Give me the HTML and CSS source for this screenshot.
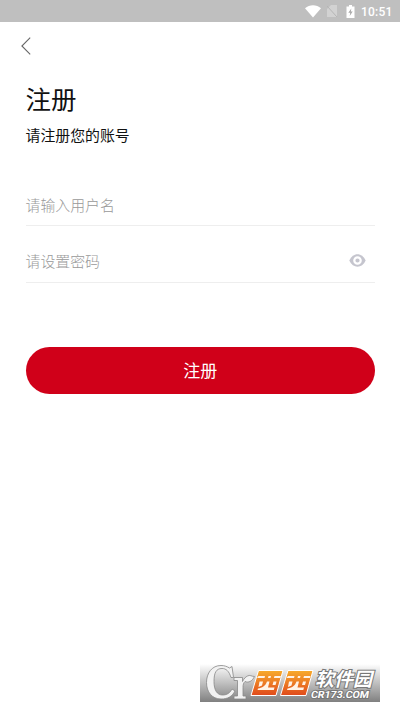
FILE: index.html
```html
<!DOCTYPE html>
<html lang="zh-CN">
<head>
<meta charset="utf-8">
<title>注册</title>
<link rel="stylesheet" href="styles.css">
</head>
<body>
<header class="status">
  <svg class="wifi" viewBox="0 0 16 13"><path d="M0 3.2C4.500-.7 11.500-.7 16 3.200L8 12.500Z"/></svg>
  <svg class="sim" viewBox="0 0 11 12"><path d="M4 0h6v12H0V4Z"/><path class="slash" d="M0 1l10 11"/></svg>
  <svg class="battery" viewBox="0 0 9 13"><path d="M3 0h3v1.500h2.500V13H.5V1.500H3Z"/><path class="bolt" d="M5.300 3.500L2.300 7.800h1.900L3.700 11l3-4.500H4.900Z"/></svg>
  <span class="time">10:51</span>
</header>
<main class="page">
  <svg class="back" viewBox="0 0 10 18"><path d="M9.200.7L.9 9l8.300 8.300"/></svg>
  <h1 class="title">注册</h1>
  <p class="subtitle">请注册您的账号</p>
  <div class="field">请输入用户名</div>
  <div class="field password">请设置密码
    <svg class="eye" viewBox="0 0 17 13"><path d="M.3 6.500C4-1.800 13-1.800 16.700 6.500C13 14.800 4 14.800.3 6.500Z"/><circle class="ring" cx="8.500" cy="6.500" r="3.200"/></svg>
  </div>
  <button class="submit">注册</button>
</main>
<footer class="brand">
  <svg class="logo" viewBox="0 0 180 38">
    <defs><linearGradient id="fire" gradientUnits="userSpaceOnUse" x1="0" y1="6" x2="0" y2="32"><stop offset="0" stop-color="#f8ad2c"/><stop offset="1" stop-color="#e0481b"/></linearGradient></defs>
    <g class="mark">
      <path d="M32 2.500l1.500 11H31C29 7 26 4.500 22 4.500 16 4.500 14 9 14 17.500S17 31 22.500 31c4.500 0 7.500-2 9.500-6l3 2c-3 5.500-7 8-14 8C12 35 6.500 28 6.500 18.500S12 1.500 21 1.500c3.500 0 6 1 8.500 2.500Z"/>
      <path d="M34 13.500h8.500v4C44 14.500 45.500 13 47.500 12c2.500-1.500 4 .5 7 .5-2.500 5-6 6.500-9.500 5-1.500 1.500-2 3-2 6V32h3v3H34v-3h3.500V16.500H34Z"/>
    </g>
    <g class="tiles">
      <path d="M58.500 6.500H83L76 31.500H51Z"/><path d="M88 6.500H113L106 31.500H80.500Z"/>
    </g>
    <g class="xi">
      <path id="holes" d="M58.500 12h6.500l-.5 2H57ZM68.500 12h2.500l-.5 2h-2.500ZM74.500 12H81l-.6 2h-6.500ZM59.500 17.500h3.500l-1 4-3.500 1.500ZM67 17.500h2.500l-1.500 6h6.500l-.7 2.500H57.500l.5-1.500c4-.5 7.500-2.500 9-7ZM73.500 17.500h3l-1 3.500h-3Z"/>
      <use href="#holes" x="29.500"/>
    </g>
    <text class="name" x="115" y="22" textLength="57">软件园</text>
    <text class="domain" transform="translate(110.500 33.800) skewX(-10)" textLength="58" lengthAdjust="spacingAndGlyphs">CR173.COM</text>
  </svg>
</footer>
</body>
</html>
```
FILE: styles.css
```css
* { box-sizing: border-box; }
body { margin: 0; height: 712px; display: flex; flex-direction: column; background: #fff; font-family: "Noto Sans CJK SC", sans-serif; color: #111; overflow: hidden; }
svg { display: block; flex: none; }
.status { height: 22px; background: #bfbfbf; display: flex; align-items: center; justify-content: flex-end; padding-right: 7px; }
.status svg { fill: #fff; }
.wifi { width: 16px; height: 13px; }
.status .sim { width: 11px; height: 12px; margin-left: 6px; fill: #d2d2d2; }
.slash { stroke: #b5b5b5; stroke-width: 1; }
.battery { width: 9px; height: 13px; margin-left: 8px; }
.status .bolt { fill: #aaa; }
.time { font: 500 12px/22px Roboto, sans-serif; color: #fff; margin-left: 6px; width: 32px; letter-spacing: .2px; padding-top: 1px; }
.page { flex: 1; padding: 15px 25px 0 25.500px; display: flex; flex-direction: column; }
.back { width: 10px; height: 18px; margin-left: -4.500px; fill: none; stroke: #666; stroke-width: 1.1; }
.title { margin: 24px 0 0; font-size: 25.500px; line-height: 38px; font-weight: 400; }
.subtitle { margin: 7px 0 0; font-size: 14.900px; line-height: 22px; }
.field { height: 56px; border-bottom: 1px solid #eee; display: flex; align-items: center; justify-content: space-between; padding: 14px 9px 0 0; font-size: 14.900px; font-weight: 300; color: #999; }
.subtitle + .field { margin-top: 24px; }
.password { height: 57px; padding-top: 13px; }
.eye { width: 17px; height: 13px; fill: #c5c5ce; }
.ring { fill: #c5c5ce; stroke: #fff; stroke-width: 2.200; }
.submit { height: 47px; margin: 64px 0 0; border: 0; border-radius: 24px; background: #d00019; color: #fff; font: 400 17px/45px "Noto Sans CJK SC", sans-serif; padding: 0 0 2px; }
.brand { width: 180px; height: 38px; margin: 0 0 10px 200px; background: linear-gradient(#fff, #808080); }
.logo { width: 180px; height: 38px; }
.mark { fill: #f2f2f2; stroke: #888; stroke-width: .8; }
.tiles { fill: url(#fire); stroke: #fff; stroke-width: 1; }
.xi { fill: #fff3e6; }
.name, .domain { fill: #fff; stroke: #777; stroke-width: 2px; paint-order: stroke; }
.name { font-family: "Noto Sans CJK SC", sans-serif; font-weight: 700; font-size: 19px; font-style: italic; }
.domain { font-family: Roboto, sans-serif; font-weight: 700; font-size: 10px; }
```
